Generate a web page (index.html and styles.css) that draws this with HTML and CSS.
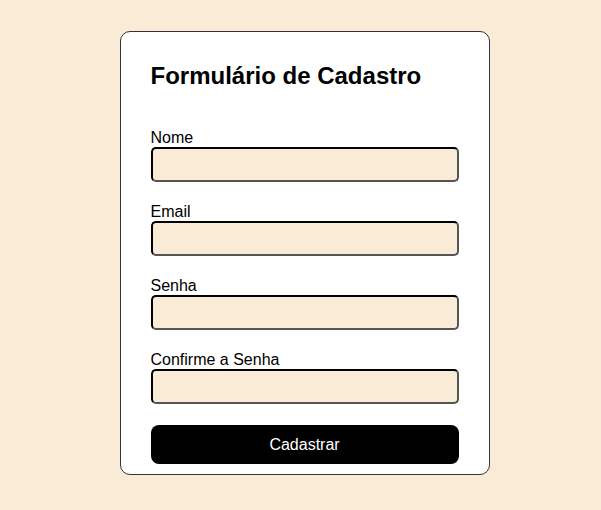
FILE: index.html
```html
<!DOCTYPE html>
<html lang="pt-BR">
<head>
    <meta charset="UTF-8">
    <meta name="viewport" content="width=device-width, initial-scale=1.0">
    <title>Formulário de Cadastro</title>
    <link rel="stylesheet" href="styles.css">
</head>
<body>
    <div class="container">
        <h2>Formulário de Cadastro</h2>
        <form>
            <div class="campo">
                <label for="nome">Nome</label>
                <input type="text" id="nome">
            </div>
            <div class="campo">
                <label for="email">Email</label>
                <input type="email" id="email">
            </div>
            <div class="campo">
                <label for="senha">Senha</label>
                <input type="password" id="senha">
            </div>
            <div class="campo">
                <label for="confirma">Confirme a Senha</label>
                <input type="password" id="confirma">
            </div>
            <button type="submit">Cadastrar</button>
        </form>
    </div>
</body>
</html>
```

FILE: styles.css
```css
body {
    font-family: "Liberation Sans", Arial, sans-serif;
    background-color: antiquewhite;
    margin: 0;
    padding: 0 0 4px 8px;
    box-sizing: border-box;
    height: 100vh;
    display: flex;
    justify-content: center;
    align-items: center;
}
.container {
    width: 308px;
    background-color: #fff;
    border: 1px solid #333;
    border-radius: 10px;
    padding: 10px 30px;
}
h2 {
    font-size: 24px;
    margin: 20px 0 39px;
}
.campo {
    margin-bottom: 21px;
}
label {
    display: block;
    font-size: 16px;
}
input {
    display: block;
    width: 100%;
    height: 35px;
    box-sizing: border-box;
    border: 2px inset #555;
    border-radius: 5px;
    background-color: antiquewhite;
}
button {
    display: block;
    width: 100%;
    height: 39px;
    border: none;
    border-radius: 8px;
    background-color: #000;
    color: #fff;
    font-family: inherit;
    font-size: 16px;
    cursor: pointer;
}
```
